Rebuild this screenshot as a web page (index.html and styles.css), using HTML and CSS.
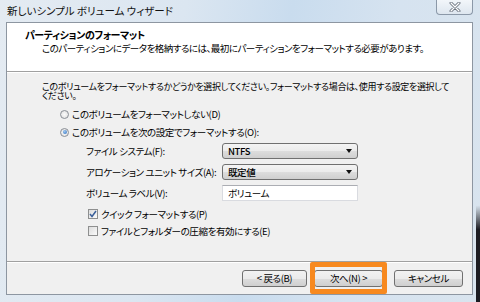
FILE: index.html
```html
<!DOCTYPE html>
<html lang="ja">
<head>
  <meta charset="UTF-8" />
  <title>新しいシンプル ボリューム ウィザード</title>
  <link rel="stylesheet" href="styles.css">
</head>
<body>

  <div class="window">

    <!-- Title bar -->
    <div class="titlebar">
      <span class="title">新しいシンプル ボリューム ウィザード</span>
      <div class="close-btn">
        <svg width="14" height="10" viewBox="0 0 14 10">
          <path d="M3 1 L11 9 M11 1 L3 9" stroke="#6b7480" stroke-width="3" stroke-linecap="round"/>
          <path d="M3 1 L11 9 M11 1 L3 9" stroke="#ffffff" stroke-width="1.2" stroke-linecap="round"/>
        </svg>
      </div>
    </div>

    <div class="client">

      <header class="wiz-header">
        <h1>パーティションのフォーマット</h1>
        <p class="subtext">このパーティションにデータを格納するには、最初にパーティションをフォーマットする必要があります。</p>
      </header>

      <div class="wiz-body">
        <p class="intro">このボリュームをフォーマットするかどうかを選択してください。フォーマットする場合は、使用する設定を選択してください。</p>

        <label class="option">
          <span class="radio"></span>
          このボリュームをフォーマットしない(D)
        </label>
        <label class="option">
          <span class="radio checked"></span>
          このボリュームを次の設定でフォーマットする(O):
        </label>

        <div class="fields">
          <span class="field-label">ファイル システム(F):</span>
          <div class="combo"><span>NTFS</span><span class="arrow"></span></div>

          <span class="field-label">アロケーション ユニット サイズ(A):</span>
          <div class="combo"><span>既定値</span><span class="arrow"></span></div>

          <span class="field-label">ボリューム ラベル(V):</span>
          <div class="textbox">ボリューム</div>
        </div>

        <label class="check-row">
          <span class="checkbox checked">
            <svg width="8" height="8" viewBox="0 0 8 8">
              <path d="M1 4 L3 6.5 L7 1" fill="none" stroke="#3a5f9a" stroke-width="1.5"/>
            </svg>
          </span>
          クイック フォーマットする(P)
        </label>
        <label class="check-row">
          <span class="checkbox"></span>
          ファイルとフォルダーの圧縮を有効にする(E)
        </label>
      </div>

      <div class="wiz-footer">
        <button class="btn btn-back">&lt; 戻る(B)</button>
        <button class="btn btn-next">次へ(N) &gt;</button>
        <button class="btn btn-cancel">キャンセル</button>
      </div>

    </div>
  </div>

</body>
</html>
```

FILE: styles.css
```css
* {
  box-sizing: border-box;
}

body {
  margin: 0;
  font-family: "Noto Sans CJK JP", "Noto Sans", sans-serif;
  font-feature-settings: "palt";
  color: #000;
  background: #cfdceb;
}

.window {
  width: 480px;
  height: 302px;
  display: flex;
  flex-direction: column;
  background:
    linear-gradient(to bottom, rgba(20, 20, 25, 0) 68%, #1c1c22 76%) right top / 4px 100% no-repeat,
    linear-gradient(100deg, #e4ebf2 0%, #dbe6f1 35%, #c9dcee 55%, #d6e3f0 75%, #d9e4ee 100%);
}

/* Title bar */
.titlebar {
  height: 22px;
  display: flex;
  justify-content: space-between;
  align-items: flex-start;
  padding-left: 7px;
  padding-right: 7px;
}

.title {
  font-size: 10.5px;
  line-height: 22px;
  color: #111;
}

.close-btn {
  width: 37px;
  height: 15px;
  border: 1px solid #8b98a8;
  border-top: none;
  border-radius: 0 0 4px 4px;
  background: linear-gradient(#f2f6fa, #dde6ef);
  display: flex;
  align-items: center;
  justify-content: center;
}

/* Client area */
.client {
  flex: 1;
  margin: 0 7px 7px 6px;
  border: 1px solid #8d96a1;
  background: #f0f0f0;
  display: flex;
  flex-direction: column;
  letter-spacing: -0.4px;
}

.wiz-header {
  height: 49px;
  background: #fff;
  border-bottom: 1px solid #a0a0a0;
  box-shadow: 0 1px 0 #fff;
  padding: 6px 0 0 18px;
}

.wiz-header h1 {
  margin: 0;
  font-size: 10px;
  line-height: 12px;
  font-weight: bold;
}

.subtext {
  margin: 1px 0 0 17px;
  font-size: 9.5px;
  line-height: 12px;
  letter-spacing: -0.5px;
}

/* Body */
.wiz-body {
  flex: 1;
  padding: 10px 0 0 35px;
  font-size: 9.5px;
}

.intro {
  margin: 0 0 5px;
  width: 408px;
  font-size: 9px;
  letter-spacing: -0.35px;
  line-height: 9px;
}

.option {
  height: 18px;
  display: flex;
  align-items: center;
  gap: 3px;
  padding-left: 18px;
}

.radio {
  width: 9px;
  height: 9px;
  border-radius: 50%;
  border: 1px solid #8a8f96;
  background: radial-gradient(#fbfbfb, #dcdcdc);
  position: relative;
}

.radio.checked::after {
  content: "";
  position: absolute;
  left: 1.5px;
  top: 1.5px;
  width: 4px;
  height: 4px;
  border-radius: 50%;
  background: radial-gradient(circle at 40% 35%, #9cc7f0, #2a6bbd);
}

.fields {
  margin: 2px 0 4px 44px;
  display: grid;
  grid-template-columns: 136px 136px;
  grid-auto-rows: 16px;
  row-gap: 5px;
  align-items: center;
}

.field-label {
  white-space: nowrap;
}

.combo {
  height: 16px;
  border: 1px solid #707070;
  border-radius: 3px;
  background: linear-gradient(#f4f4f4 0%, #ebebeb 50%, #dddddd 51%, #cfcfcf 100%);
  display: flex;
  align-items: center;
  justify-content: space-between;
  padding: 0 5px 0 5px;
  font-weight: 500;
}

.arrow {
  width: 0;
  height: 0;
  border-left: 3px solid transparent;
  border-right: 3px solid transparent;
  border-top: 4px solid #111;
}

.textbox {
  height: 16px;
  border: 1px solid #d9dbe0;
  border-top-color: #abadb3;
  background: #fff;
  padding-left: 5px;
  line-height: 14px;
}

.check-row {
  height: 17px;
  display: flex;
  align-items: center;
  gap: 3px;
  padding-left: 46px;
}

.checkbox {
  width: 10px;
  height: 10px;
  border: 1px solid #8e8f8f;
  background: linear-gradient(135deg, #dcdcdc, #fbfbfb);
  display: flex;
  align-items: center;
  justify-content: center;
}

/* Footer */
.wiz-footer {
  height: 33px;
  border-top: 1px solid #a0a0a0;
  box-shadow: inset 0 1px 0 #fff;
  display: flex;
  justify-content: flex-end;
  align-items: center;
  padding: 0 9px 0 0;
}

.btn {
  height: 17px;
  padding: 0;
  font-family: inherit;
  font-feature-settings: "palt";
  font-size: 9.5px;
  letter-spacing: -0.4px;
  color: #000;
  border: 1px solid #707070;
  border-radius: 3px;
  background: linear-gradient(#f2f2f2 0%, #ebebeb 50%, #dddddd 51%, #cfcfcf 100%);
}

.btn-back {
  width: 65px;
}

.btn-next {
  width: 69px;
  margin-left: 7px;
  position: relative;
}

/* orange highlight drawn over the screenshot */
.btn-next::after {
  content: "";
  position: absolute;
  left: -5px;
  right: -5px;
  top: -9px;
  bottom: -8px;
  border: 5px solid #f7891f;
  border-radius: 2px;
}

.btn-cancel {
  width: 69px;
  margin-left: 11px;
}
```
